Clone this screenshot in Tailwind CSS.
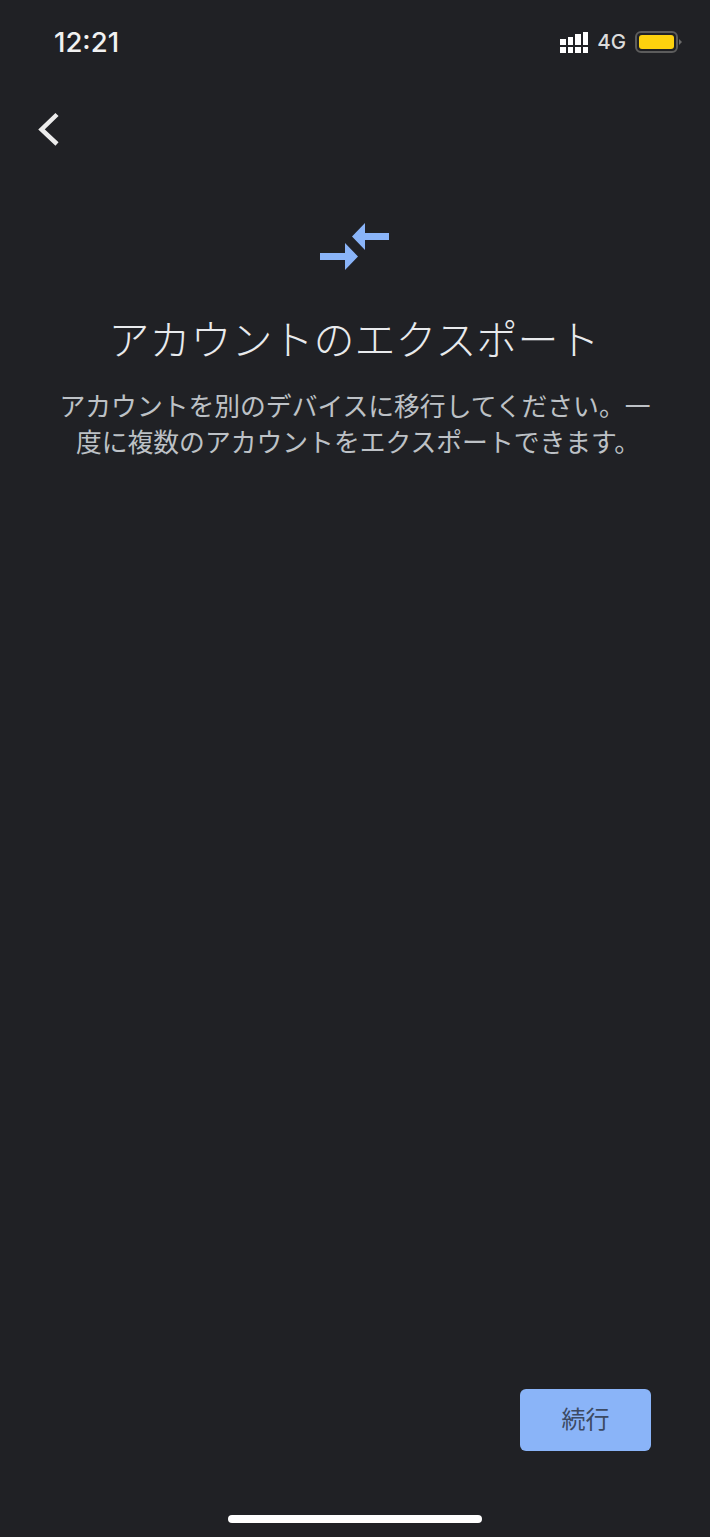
<!DOCTYPE html>
<html lang="ja">
<head>
  <meta charset="UTF-8">
  <meta name="viewport" content="width=device-width, initial-scale=1.0">
  <title>アカウントのエクスポート</title>
  <script src="https://cdn.jsdelivr.net/npm/@tailwindcss/browser@4"></script>
</head>
<body class="bg-[#202125] font-['Roboto','Noto_Sans_CJK_JP',sans-serif]">
  <div class="flex h-[1537px] w-[710px] flex-col overflow-hidden">
    <!-- Status bar -->
    <header class="flex h-[84px] items-center justify-between pl-[54px] pr-[28px]">
      <span class="pt-[2px] font-['Inter',sans-serif] text-[27.500px] leading-none font-medium text-[#f1f1f1]">12:21</span>
      <div class="flex items-center">
        <div class="grid grid-cols-4 items-end gap-x-[2px] gap-y-[2px]">
          <div class="flex h-[13px] items-end"><span class="h-[6px] w-[5.500px] bg-white"></span></div>
          <div class="flex h-[13px] items-end"><span class="h-[8px] w-[5.500px] bg-white"></span></div>
          <div class="flex h-[13px] items-end"><span class="h-[11px] w-[5.500px] bg-white"></span></div>
          <div class="flex h-[13px] items-end"><span class="h-[13px] w-[5.500px] bg-white"></span></div>
          <span class="h-[6px] w-[5.500px] bg-white"></span>
          <span class="h-[6px] w-[5.500px] bg-white"></span>
          <span class="h-[6px] w-[5.500px] bg-white"></span>
          <span class="h-[6px] w-[5.500px] bg-white"></span>
        </div>
        <span class="ml-[9px] font-['Inter',sans-serif] text-[20.500px] leading-none font-medium text-[#dcdcdc]">4G</span>
        <div class="ml-[9px] flex h-[22px] w-[43px] items-center rounded-[6px] border-[2px] border-[#5c5c5c] p-[2px]">
          <div class="h-full w-full rounded-[3px] bg-[#fdd20e]"></div>
        </div>
        <svg class="ml-[1px]" width="3" height="6" viewBox="0 0 3 6"><path d="M0 0L3 3L0 6Z" fill="#6a6a6a"/></svg>
      </div>
    </header>

    <!-- Back -->
    <div class="flex h-[90px] items-center pl-[36px]">
      <svg width="24" height="36" viewBox="0 0 24 36" fill="none"><path d="M21 3.500L5.500 18.500L21 33" stroke="#ececec" stroke-width="4.500"/></svg>
    </div>

    <!-- Heading block -->
    <main class="flex flex-1 flex-col items-center">
      <svg class="mt-[48px]" width="70" height="48" viewBox="0 0 70 48" fill="#8ab4f8">
        <path d="M32 14.500L45 1V11H69V18H45V28Z"/>
        <path d="M38 34.500L25 48V38H0V31H25V21Z"/>
      </svg>
      <h1 class="mt-[41px] pr-[2px] text-[41px] leading-[60px] font-light whitespace-nowrap text-[#e8eaed]">アカウントのエクスポート</h1>
      <p class="mt-[18px] w-[610px] text-center text-[25.800px] leading-[36px] font-normal text-[#bdc1c6]">アカウントを別のデバイスに移行してください。一<br><span class="pl-[6px]">度に複数のアカウントをエクスポートできます。</span></p>
    </main>

    <!-- Footer -->
    <div class="flex justify-end pr-[59px]">
      <button class="flex h-[62px] w-[131px] items-center justify-center rounded-[6px] bg-[#8ab4f8] text-[24px] text-[#3c4a63]">続行</button>
    </div>
    <div class="flex justify-center pt-[64px] pb-[14px]">
      <div class="h-[8px] w-[254px] rounded-full bg-white"></div>
    </div>
  </div>
</body>
</html>
